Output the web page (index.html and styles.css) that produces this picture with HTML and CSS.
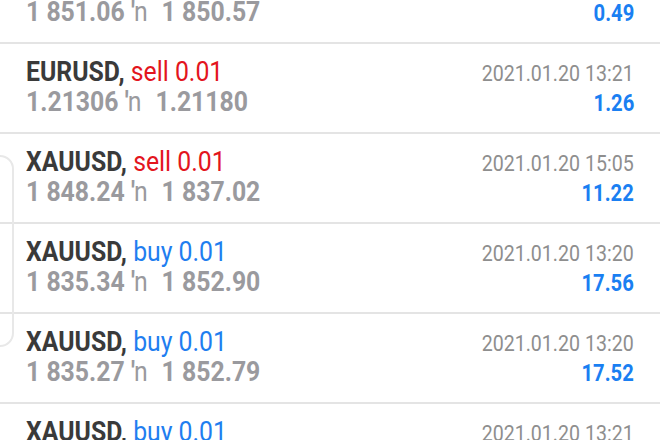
FILE: index.html
```html
<!DOCTYPE html>
<html>
<head>
<meta charset="utf-8">
<link rel="stylesheet" href="styles.css">
</head>
<body>
<div class="screen">
  <div class="list">
    <div class="row">
      <div class="line">
        <span class="title"><b class="sym">XAUUSD,</b> <span class="buy">buy 0.01</span></span>
        <span class="date">2021.01.20 13:20</span>
      </div>
      <div class="line">
        <span class="prices">1 851.06 <span class="arrow"><span class="tick">′</span>n</span>1 850.57</span>
        <span class="profit">0.49</span>
      </div>
    </div>
    <div class="row">
      <div class="line">
        <span class="title"><b class="sym">EURUSD,</b> <span class="sell">sell 0.01</span></span>
        <span class="date">2021.01.20 13:21</span>
      </div>
      <div class="line">
        <span class="prices">1.21306 <span class="arrow"><span class="tick">′</span>n</span>1.21180</span>
        <span class="profit">1.26</span>
      </div>
    </div>
    <div class="row">
      <div class="line">
        <span class="title"><b class="sym">XAUUSD,</b> <span class="sell">sell 0.01</span></span>
        <span class="date">2021.01.20 15:05</span>
      </div>
      <div class="line">
        <span class="prices">1 848.24 <span class="arrow"><span class="tick">′</span>n</span>1 837.02</span>
        <span class="profit">11.22</span>
      </div>
    </div>
    <div class="row">
      <div class="line">
        <span class="title"><b class="sym">XAUUSD,</b> <span class="buy">buy 0.01</span></span>
        <span class="date">2021.01.20 13:20</span>
      </div>
      <div class="line">
        <span class="prices">1 835.34 <span class="arrow"><span class="tick">′</span>n</span>1 852.90</span>
        <span class="profit">17.56</span>
      </div>
    </div>
    <div class="row">
      <div class="line">
        <span class="title"><b class="sym">XAUUSD,</b> <span class="buy">buy 0.01</span></span>
        <span class="date">2021.01.20 13:20</span>
      </div>
      <div class="line">
        <span class="prices">1 835.27 <span class="arrow"><span class="tick">′</span>n</span>1 852.79</span>
        <span class="profit">17.52</span>
      </div>
    </div>
    <div class="row">
      <div class="line">
        <span class="title"><b class="sym">XAUUSD,</b> <span class="buy">buy 0.01</span></span>
        <span class="date">2021.01.20 13:21</span>
      </div>
      <div class="line">
        <span class="prices">1 835.10 <span class="arrow"><span class="tick">′</span>n</span>1 852.60</span>
        <span class="profit">17.50</span>
      </div>
    </div>
  </div>
  <div class="edge"></div>
</div>
</body>
</html>
```

FILE: styles.css
```css
html, body {
  margin: 0;
  padding: 0;
  background: #ffffff;
}
.screen {
  position: relative;
  width: 660px;
  height: 440px;
  overflow: hidden;
  font-family: Roboto, "Liberation Sans", sans-serif;
}
.list {
  margin-top: -46px;
}
.row {
  height: 75px;
  padding: 13px 26px 0 26px;
  border-bottom: 2px solid #e4e4e4;
}
.line {
  display: flex;
  justify-content: space-between;
  align-items: baseline;
  height: 30px;
  line-height: 30px;
}
.title,
.prices {
  font-size: 28.5px;
  white-space: nowrap;
  transform: scaleX(0.87);
  transform-origin: left center;
}
.sym {
  font-weight: 700;
  color: #3a3a3a;
}
.sell {
  color: #e3151d;
}
.buy {
  color: #1f7ef0;
}
.prices {
  font-weight: 700;
  color: #9a9a9e;
}
.arrow {
  font-weight: 400;
  margin-right: 16px;
}
.tick {
  font-weight: 700;
  margin-right: -1px;
}
.date,
.profit {
  white-space: nowrap;
  transform-origin: right center;
}
.date {
  font-size: 22.5px;
  color: #8e8e8e;
  transform: scaleX(0.87);
}
.profit {
  font-size: 23.5px;
  font-weight: 700;
  color: #1a7ff2;
  transform: scaleX(0.86);
}
.edge {
  position: absolute;
  left: -30px;
  top: 155px;
  width: 40px;
  height: 188px;
  border: 2px solid #e8e8e8;
  border-radius: 14px;
}
```
